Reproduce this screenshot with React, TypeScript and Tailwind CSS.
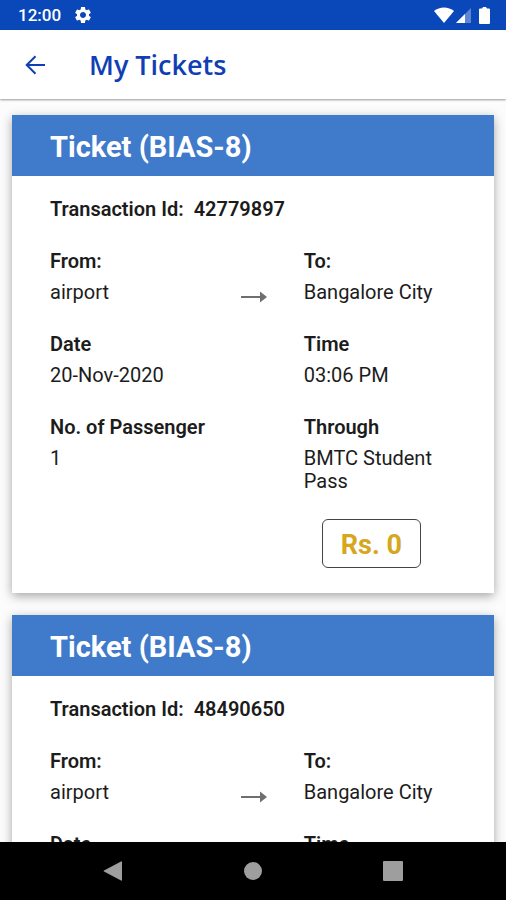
type Ticket = {
  route: string;
  transactionId: string;
  from: string;
  to: string;
  date: string;
  time: string;
  passengers: number;
  through: string;
  fare: number;
};

const tickets: Ticket[] = [
  {
    route: 'BIAS-8',
    transactionId: '42779897',
    from: 'airport',
    to: 'Bangalore City',
    date: '20-Nov-2020',
    time: '03:06 PM',
    passengers: 1,
    through: 'BMTC Student Pass',
    fare: 0,
  },
  {
    route: 'BIAS-8',
    transactionId: '48490650',
    from: 'airport',
    to: 'Bangalore City',
    date: '20-Nov-2020',
    time: '03:06 PM',
    passengers: 1,
    through: 'BMTC Student Pass',
    fare: 0,
  },
];

function StatusBar() {
  return (
    <div className="flex h-[30px] shrink-0 items-center justify-between bg-[#0a47b9] pr-4 pl-[18px] text-white">
      <div className="flex items-center gap-3">
        <span className="text-[17px] leading-5 font-medium">12:00</span>
        <svg viewBox="0 0 24 24" className="size-5" fill="currentColor" aria-hidden="true">
          <path d="M19.14 12.94c.04-.3.06-.61.06-.94 0-.32-.02-.64-.07-.94l2.03-1.58c.18-.14.23-.41.12-.61l-1.92-3.32c-.12-.22-.37-.29-.59-.22l-2.39.96c-.5-.38-1.03-.7-1.62-.94l-.36-2.54c-.04-.24-.24-.41-.48-.41h-3.84c-.24 0-.43.17-.47.41l-.36 2.54c-.59.24-1.13.57-1.62.94l-2.39-.96c-.22-.08-.47 0-.59.22L2.74 8.87c-.12.21-.08.47.12.61l2.03 1.58c-.05.3-.09.63-.09.94s.02.64.07.94l-2.03 1.58c-.18.14-.23.41-.12.61l1.92 3.32c.12.22.37.29.59.22l2.39-.96c.5.38 1.03.7 1.62.94l.36 2.54c.05.24.24.41.48.41h3.84c.24 0 .44-.17.47-.41l.36-2.54c.59-.24 1.13-.56 1.62-.94l2.39.96c.22.08.47 0 .59-.22l1.92-3.32c.12-.22.07-.47-.12-.61l-2.01-1.58zM12 15.6c-1.98 0-3.6-1.62-3.6-3.6s1.62-3.6 3.6-3.6 3.6 1.62 3.6 3.6-1.62 3.6-3.6 3.6z" />
        </svg>
      </div>
      <div className="flex items-center">
        <svg viewBox="0 0 20 16" className="h-4 w-5" fill="currentColor" aria-hidden="true">
          <path d="M0 4C5.5-.7 14.5-.7 20 4L10 16z" />
        </svg>
        <svg viewBox="0 0 16 16" className="ml-0.5 size-4" fill="currentColor" aria-hidden="true">
          <path d="M15 1v15H0z" opacity="0.35" />
          <path d="M9 7v9H0z" />
        </svg>
        <svg viewBox="0 0 11 17" className="ml-[7px] h-[17px] w-[11px]" fill="currentColor" aria-hidden="true">
          <path d="M4 0h3l1 1.5h2a1 1 0 0 1 1 1V16a1 1 0 0 1-1 1H1a1 1 0 0 1-1-1V2.5a1 1 0 0 1 1-1h2z" />
        </svg>
      </div>
    </div>
  );
}

function Header() {
  return (
    <header className="z-10 flex h-[69px] shrink-0 items-center bg-white pl-[21px] text-[#103fb5] shadow-[0_1px_2px_rgba(0,0,0,0.4)]">
      <button type="button" aria-label="Back" className="p-1">
        <svg viewBox="0 0 20 20" className="size-5" fill="none" stroke="currentColor" strokeWidth="2" aria-hidden="true">
          <path d="M20 10H2M10.5 1.2L1.7 10l8.8 8.8" />
        </svg>
      </button>
      <h1 className="ml-10 font-['Open_Sans',sans-serif] text-[27px] leading-9 font-semibold">My Tickets</h1>
    </header>
  );
}

function Field({ label, value }: { label: string; value: string | number }) {
  return (
    <div>
      <dt className="leading-6 font-semibold">{label}</dt>
      <dd className="mt-2 leading-[23px]">{value}</dd>
    </div>
  );
}

function TicketCard({ ticket }: { ticket: Ticket }) {
  return (
    <article className="bg-white shadow-[0_3px_10px_rgba(0,0,0,0.35)]">
      <h2 className="bg-[#3f7acb] px-[38px] pt-3.5 pb-[11px] text-[29px] leading-9 font-bold text-white">
        Ticket ({ticket.route})
      </h2>
      <div className="px-[38px] pt-[21px] pb-[25px] text-[20px] text-[#1c1c1c]">
        <p className="leading-6 font-semibold">Transaction Id:&nbsp; {ticket.transactionId}</p>
        <dl className="mt-7 grid grid-cols-[5fr_3fr] gap-y-7">
          <div className="flex items-end justify-between pr-[37px]">
            <Field label="From:" value={ticket.from} />
            <svg viewBox="0 0 26 14" className="h-[14px] w-[26px] text-[#6f6f6f]" fill="currentColor" aria-hidden="true">
              <path d="M0 6h19V1.5L26 7l-7 5.500V8H0z" />
            </svg>
          </div>
          <Field label="To:" value={ticket.to} />
          <Field label="Date" value={ticket.date} />
          <Field label="Time" value={ticket.time} />
          <Field label="No. of Passenger" value={ticket.passengers} />
          <Field label="Through" value={ticket.through} />
        </dl>
        <div className="mt-[26px] grid grid-cols-[5fr_3fr]">
          <p className="col-start-2 ml-[18px] justify-self-start rounded-md border border-[#444] px-[18px] pt-[9px] pb-[5px] text-[27px] leading-[33px] font-bold text-[#d6a71c]">
            Rs. {ticket.fare}
          </p>
        </div>
      </div>
    </article>
  );
}

function NavigationBar() {
  return (
    <nav className="z-10 flex h-[58px] shrink-0 items-center justify-center gap-[120px] bg-black text-[#9e9e9e]">
      <button type="button" aria-label="Back">
        <svg viewBox="0 0 20 20" className="size-5" fill="currentColor" aria-hidden="true">
          <path d="M18 0.5Q19 0 19 1v18q0 1-1 .5L1 10.5q-1-.5 0-1z" />
        </svg>
      </button>
      <button type="button" aria-label="Home">
        <svg viewBox="0 0 20 20" className="size-5" fill="currentColor" aria-hidden="true">
          <circle cx="10" cy="10" r="9" />
        </svg>
      </button>
      <button type="button" aria-label="Recent apps">
        <svg viewBox="0 0 20 20" className="size-5" fill="currentColor" aria-hidden="true">
          <rect width="20" height="20" rx="1" />
        </svg>
      </button>
    </nav>
  );
}

export default function App() {
  return (
    <div className="flex h-screen flex-col overflow-hidden bg-[#fcfcfc] font-['Roboto',sans-serif]">
      <StatusBar />
      <Header />
      <main className="min-h-0 flex-1 overflow-y-auto px-3 pt-4 [scrollbar-width:none]">
        <div className="flex flex-col gap-[22px]">
          {tickets.map((ticket) => (
            <TicketCard key={ticket.transactionId} ticket={ticket} />
          ))}
        </div>
      </main>
      <NavigationBar />
    </div>
  );
}
